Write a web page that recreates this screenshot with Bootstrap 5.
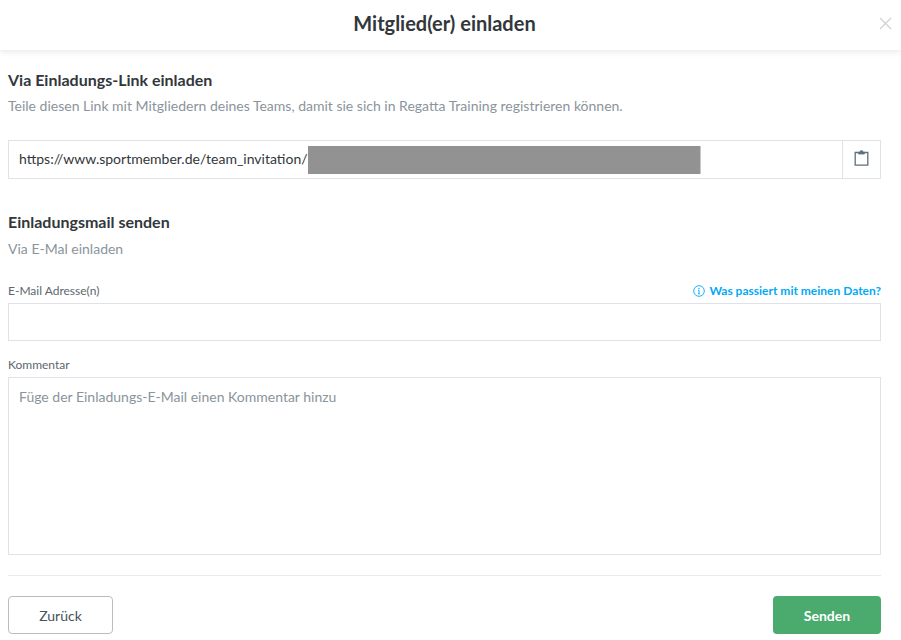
<!DOCTYPE html>
<html lang="de">
<head>
  <meta charset="UTF-8" />
  <meta name="viewport" content="width=device-width, initial-scale=1.0"/>
  <title>Mitglied(er) einladen</title>
  <link rel="stylesheet" href="https://cdn.jsdelivr.net/npm/bootstrap@5.3.3/dist/css/bootstrap.min.css">
  <style>
    body {
      font-family: Lato, "Liberation Sans", sans-serif;
      background-color: #fff;
      color: #32373b;
      overflow: hidden;
    }

    .invite-header {
      height: 50px;
      padding-right: 12px;
      box-shadow: 0 2px 6px rgba(40,50,80,0.1);
    }

    .invite-header__title {
      font-size: 20px;
      font-weight: 700;
      color: #32373b;
      margin: 0;
      line-height: 47px;
    }

    .invite-close {
      position: absolute;
      top: 17px;
      right: 9px;
      width: 13px;
      height: 13px;
      padding: 0;
      border: 0;
      background: none;
      display: flex;
    }

    .invite-body {
      padding: 0 20px 0 8px;
    }

    .section-title {
      font-size: 16px;
      font-weight: 700;
      line-height: 20px;
      margin: 0;
      color: #32373b;
    }

    .section-desc {
      font-size: 14px;
      line-height: 18px;
      color: #8a949c;
      margin: 0;
    }

    .link-box {
      height: 39px;
      border: 1px solid #e1e2e9;
      margin-top: 25px;
    }

    .link-box__url {
      font-size: 14px;
      color: #32373b;
      padding-left: 10px;
      white-space: nowrap;
      overflow: hidden;
    }

    .link-box__redact {
      display: inline-block;
      width: 393px;
      height: 30px;
      margin-top: -2px;
      background: #929292;
      border-right: 1px solid #c8c8c8;
      vertical-align: middle;
    }

    .link-box__copy {
      width: 38px;
      border: 0;
      border-left: 1px solid #e1e2e9;
      border-radius: 0;
      background: none;
      padding: 0;
    }

    .field-label {
      font-size: 12px;
      line-height: 14px;
      color: #5d676e;
      margin: 0;
    }

    .info-link {
      font-size: 12px;
      line-height: 14px;
      font-weight: 700;
      color: #02a9f4;
      text-decoration: none;
    }

    .field-input {
      border: 1px solid #e1e2e9;
      border-radius: 0;
      font-size: 14px;
      color: #32373b;
      padding: 0 10px;
    }

    .field-input::placeholder {
      color: #8a949c;
    }

    .field-input--mail {
      height: 38px;
      margin-top: 5px;
    }

    .field-input--comment {
      height: 178px;
      margin-top: 5px;
      padding-top: 8px;
      resize: none;
    }

    .invite-rule {
      margin: 20px 0;
      border: 0;
      border-top: 1px solid #e9eaee;
      opacity: 1;
    }

    .btn-back, .btn-send {
      height: 38px;
      font-size: 14px;
      padding: 0;
      border-radius: 4px;
    }

    .btn-back {
      width: 105px;
      border: 1px solid #b9bdc2;
      color: #46525c;
      background: #fff;
    }

    .btn-send {
      width: 108px;
      border: 0;
      color: #fff;
      font-weight: 700;
      background: #4bab6e;
    }

    .invite-first { margin-top: 20px; }
    .invite-first-desc { margin-top: 7px; }
    .invite-second { margin-top: 33px; }
    .invite-second-desc { margin-top: 8px; }
    .invite-mail-head { margin-top: 26px; gap: 3px; }
    .invite-comment-label { margin-top: 17px; }
  </style>
</head>
<body>

  <header class="invite-header position-relative text-center">
    <h1 class="invite-header__title">Mitglied(er) einladen</h1>
    <button type="button" class="invite-close" aria-label="Schließen">
      <svg width="13" height="13" viewBox="0 0 13 13" fill="none" stroke="#ced2d6" stroke-width="1.3">
        <path d="M1 1l11 11M12 1L1 12"/>
      </svg>
    </button>
  </header>

  <main class="invite-body">
    <h2 class="section-title invite-first">Via Einladungs-Link einladen</h2>
    <p class="section-desc invite-first-desc">Teile diesen Link mit Mitgliedern deines Teams, damit sie sich in Regatta Training registrieren können.</p>

    <div class="link-box d-flex align-items-center">
      <div class="link-box__url flex-grow-1">https://www.sportmember.de/team_invitation/<span class="link-box__redact"></span></div>
      <button type="button" class="link-box__copy h-100 d-flex align-items-center justify-content-center pb-1" aria-label="Kopieren">
        <svg width="15" height="16" viewBox="0 0 15 16" fill="none" stroke="#5f6f7b" stroke-width="1.3">
          <path d="M4.5 2.5H1.2v12.6h12.6V2.5h-3.3"/>
          <path d="M4.6 4V1.9h1.9V.8h2v1.1h1.9V4z" fill="#5f6f7b" stroke-width="0.8"/>
        </svg>
      </button>
    </div>

    <h2 class="section-title invite-second">Einladungsmail senden</h2>
    <p class="section-desc invite-second-desc">Via E-Mal einladen</p>

    <div class="d-flex justify-content-between align-items-center invite-mail-head">
      <label class="field-label" for="mailInput">E-Mail Adresse(n)</label>
      <a class="info-link d-flex align-items-center invite-mail-head-link" href="#">
        <svg class="me-1" width="12" height="12" viewBox="0 0 12 12" fill="none" stroke="#02a9f4" stroke-width="0.9">
          <circle cx="6" cy="6" r="5.3"/>
          <path d="M6 5.2v3.6M5 8.8h2M5 5.2h1"/>
          <path d="M6 2.9v1" stroke-width="1.2"/>
        </svg>
        Was passiert mit meinen Daten?
      </a>
    </div>
    <input id="mailInput" type="text" class="form-control field-input field-input--mail">

    <label class="field-label d-block invite-comment-label" for="commentInput">Kommentar</label>
    <textarea id="commentInput" class="form-control field-input field-input--comment" placeholder="Füge der Einladungs-E-Mail einen Kommentar hinzu"></textarea>

    <hr class="invite-rule">

    <div class="d-flex justify-content-between">
      <button type="button" class="btn btn-back">Zurück</button>
      <button type="button" class="btn btn-send">Senden</button>
    </div>
  </main>

</body>
</html>
